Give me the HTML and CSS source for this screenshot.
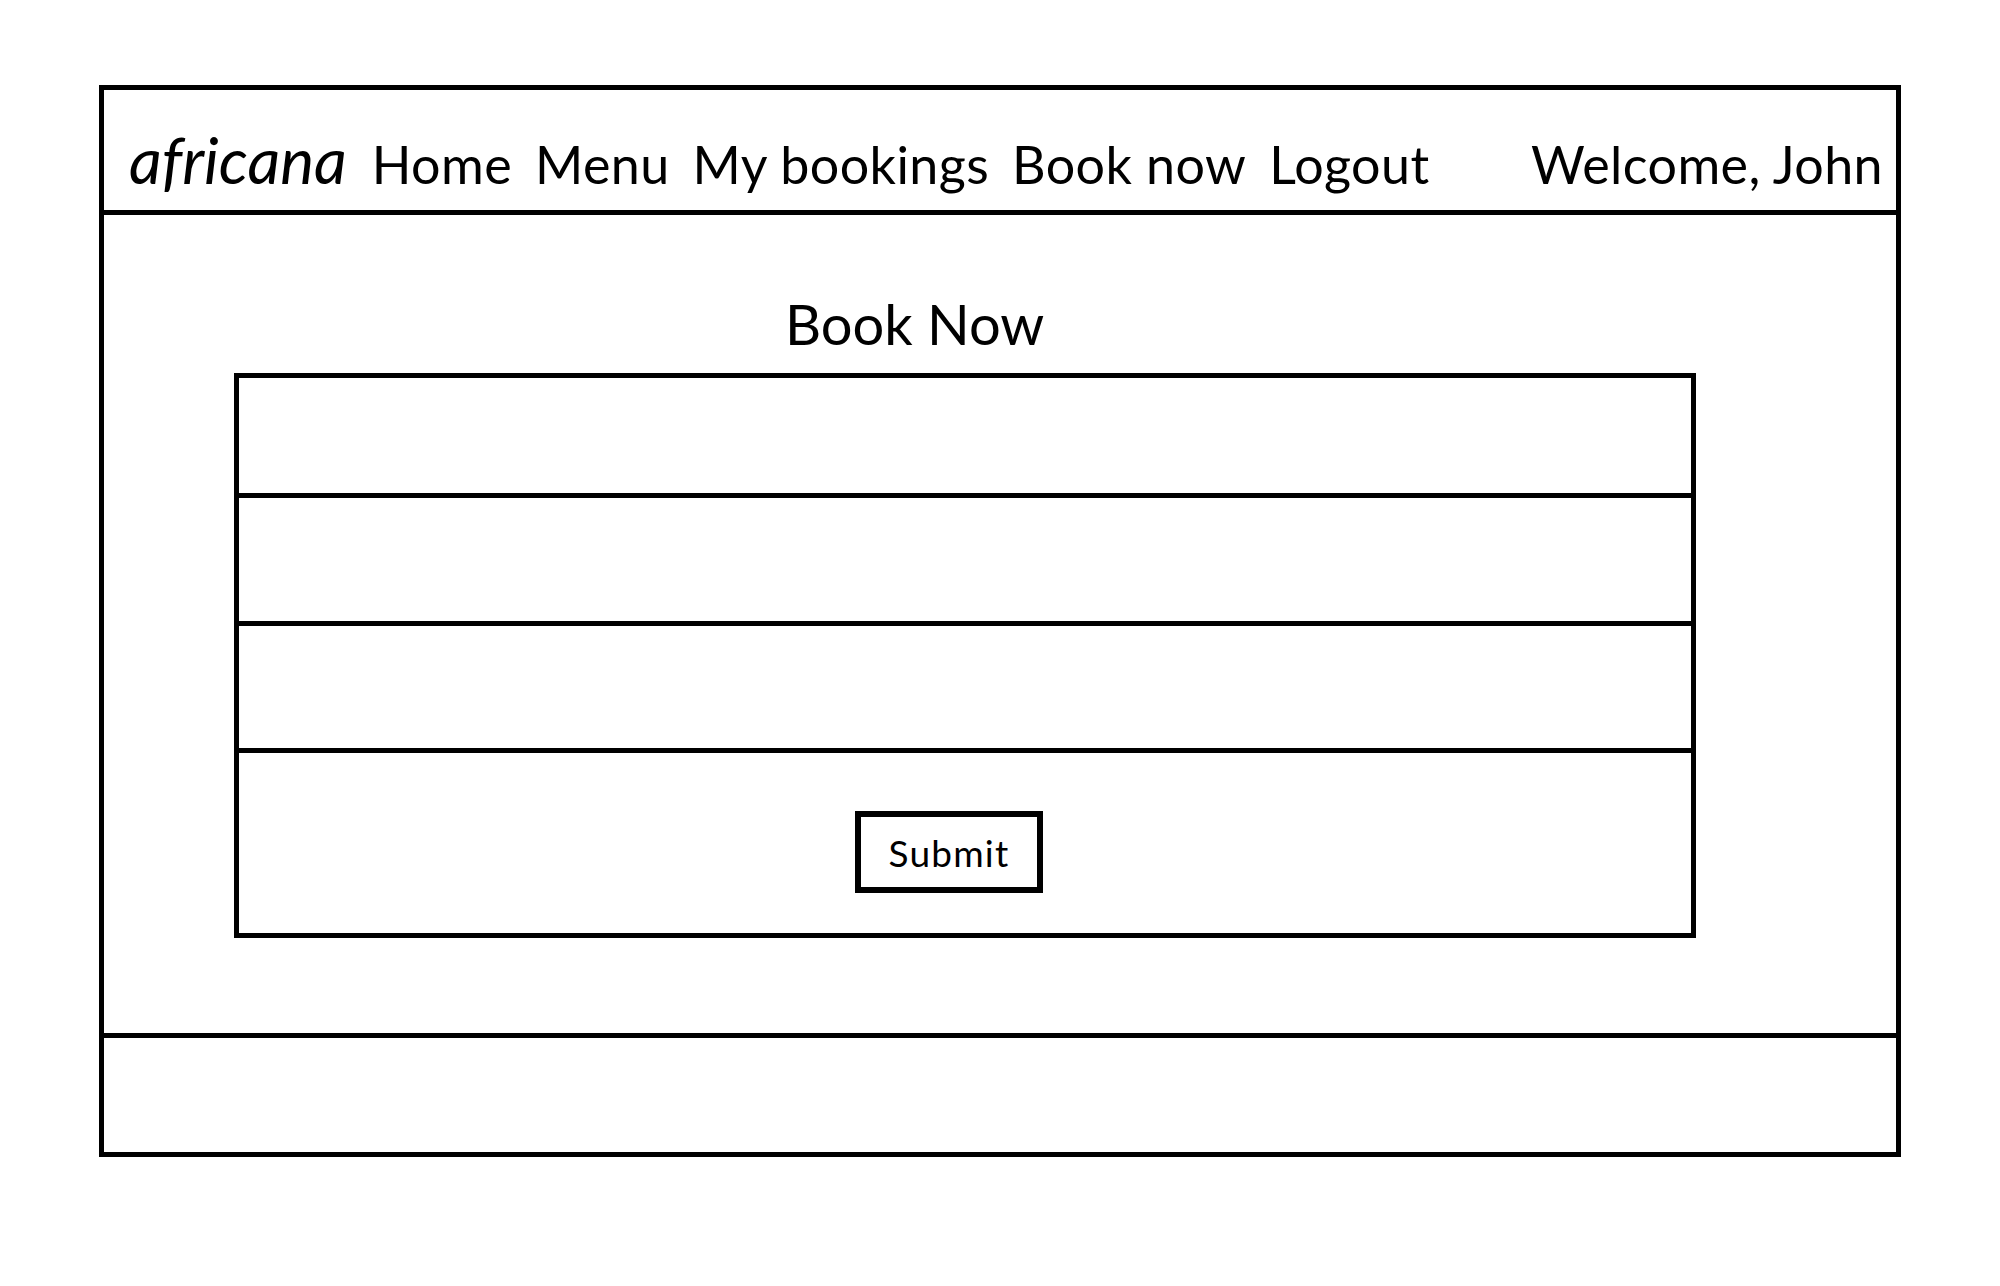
FILE: index.html
```html
<!DOCTYPE html>
<html lang="en">
<head>
<meta charset="utf-8">
<title>africana - Book Now</title>
<link rel="stylesheet" href="styles.css">
</head>
<body>
<div class="frame">
  <header class="header">
    <div class="logo">africana</div>
    <nav class="nav">
      <span class="nav-item">Home</span>
      <span class="nav-item">Menu</span>
      <span class="nav-item">My bookings</span>
      <span class="nav-item">Book now</span>
      <span class="nav-item">Logout</span>
    </nav>
    <div class="welcome">Welcome, John</div>
  </header>
  <main class="main">
    <h1 class="title">Book Now</h1>
    <form class="form">
      <div class="row row-1"></div>
      <div class="row row-2"></div>
      <div class="row row-3"></div>
      <div class="row row-submit">
        <button type="button" class="submit">Submit</button>
      </div>
    </form>
  </main>
  <footer class="footer"></footer>
</div>
</body>
</html>
```

FILE: styles.css
```css
* { box-sizing: border-box; }

html, body {
  margin: 0;
  padding: 0;
  background: #fff;
}

body {
  font-family: Lato, "Open Sans", sans-serif;
  color: #000;
}

.frame {
  margin: 85px 0 0 99px;
  width: 1802px;
  border: 5px solid #000;
}

.header {
  height: 125px;
  border-bottom: 5px solid #000;
  display: flex;
  align-items: baseline;
  padding: 32px 13px 0 25px;
  white-space: nowrap;
}

.logo {
  font-style: italic;
  font-size: 64px;
  line-height: 1.2;
  margin-right: 25px;
}

.nav {
  display: flex;
  gap: 23px;
}

.nav-item,
.welcome {
  font-size: 52px;
  line-height: 1.2;
  letter-spacing: 0.4px;
}

.welcome {
  margin-left: auto;
}

.main {
  height: 823px;
  border-bottom: 5px solid #000;
  padding: 75px 200px 0 130px;
}

.title {
  margin: 0;
  font-weight: 400;
  font-size: 56px;
  line-height: 1.2;
  padding-left: 551px;
  height: 83px;
}

.form {
  border: 5px solid #000;
  margin: 0;
}

.row + .row {
  border-top: 5px solid #000;
}

.row-1 { height: 115px; }
.row-2 { height: 128px; }
.row-3 { height: 127px; }

.row-submit {
  height: 185px;
  padding: 58px 0 0 616px;
}

.submit {
  display: flex;
  align-items: center;
  justify-content: center;
  width: 188px;
  height: 82px;
  border: 6px solid #000;
  background: #fff;
  font-family: Lato, "Open Sans", sans-serif;
  font-size: 37px;
  color: #000;
  padding: 0;
  letter-spacing: 1.2px;
}

.footer {
  height: 114px;
}
```
